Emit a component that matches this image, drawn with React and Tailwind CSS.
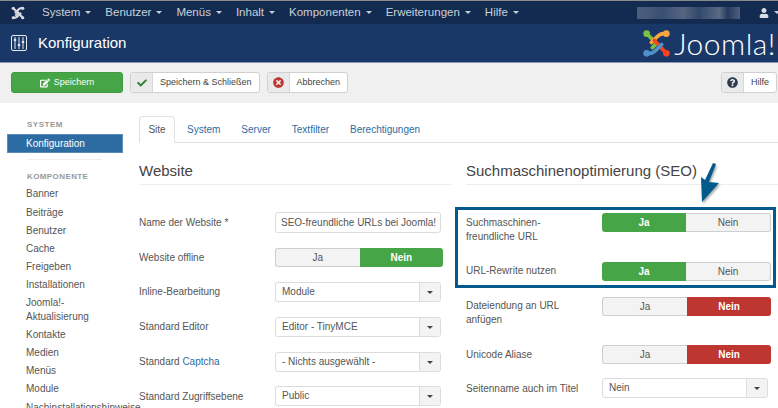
import React from "react";
import { FaCheck, FaQuestionCircle, FaTimesCircle, FaEdit, FaUser } from "react-icons/fa";

const Caret = ({ c = "border-t-[#c5cdd9]" }) => (
  <span className={`inline-block w-0 h-0 border-x-[3px] border-x-transparent border-t-[3px] ${c} ml-[5px] align-middle`} />
);

const JLogo = ({ mono, size = 20 }) => {
  const cols = mono ? ["#d5d9e0", "#d5d9e0", "#d5d9e0", "#d5d9e0"] : ["#7ac143", "#f9a541", "#f44321", "#5091cd"];
  return (
    <svg className="shrink-0" width={size} height={size} viewBox="0 0 28 28" fill="none" strokeLinecap="round" strokeWidth={mono ? 4.4 : 3.6}>
      <path d="M5 5 L14 14 L10 18" stroke={cols[0]} />
      <circle cx="4.5" cy="4.5" r="3.2" fill={cols[0]} />
      <path d="M23 5 C19 3 16 6 14 8 L9 13" stroke={cols[1]} />
      <circle cx="23.5" cy="4.5" r="3.2" fill={cols[1]} />
      <path d="M23 23 L12 11" stroke={cols[2]} />
      <circle cx="23.5" cy="23.5" r="3.2" fill={cols[2]} />
      <path d="M5 23 C9 25 12 22 14 20 L19 15" stroke={cols[3]} />
      <circle cx="4.5" cy="23.5" r="3.2" fill={cols[3]} />
    </svg>
  );
};

const Toggle = ({ on, w = "w-[169px]", cls = "" }) => {
  const base = "flex-1 flex items-center justify-center text-[10px]";
  const idle = "bg-[#f3f3f3] text-[#555] border border-[#cfcfcf]";
  const active = on === "rot" ? "bg-[#bd362f] text-white font-bold" : "bg-[#46a546] text-white font-bold";
  const jaOn = on === "ja";
  return (
    <div className={`flex h-[19px] ${w} ${cls}`}>
      <div className={`${base} rounded-l-[3px] ${jaOn ? active : idle + " border-r-0"}`}>Ja</div>
      <div className={`${base} rounded-r-[3px] ${jaOn ? idle + " border-l-0" : active}`}>Nein</div>
    </div>
  );
};

const Select = ({ v, cls = "" }) => (
  <div className={`flex h-[20px] w-[166px] border border-[#dcdcdc] rounded-[3px] bg-white text-[10px] text-[#555] ${cls}`}>
    <div className="flex-1 pl-[6px] leading-[18px] whitespace-nowrap overflow-hidden">{v}</div>
    <div className="w-[21px] bg-[#f3f3f3] border-l border-[#dcdcdc] rounded-r-[3px] flex items-center justify-center">
      <span className="w-0 h-0 border-x-[3px] border-x-transparent border-t-[3px] border-t-[#444]" />
    </div>
  </div>
);

const Row = ({ label, h, children }) => (
  <div className={`flex items-start ${h}`}>
    <div className="w-[136px] shrink-0 pt-[1px] text-[10px] leading-[14px] text-[#555]">{label}</div>
    {children}
  </div>
);

const ToolBtn = ({ icon, label, cls = "" }) => (
  <div className={`flex h-[21px] border border-[#d0d0d0] rounded-[3px] bg-white text-[9px] text-[#444] ${cls}`}>
    <div className="w-[22px] bg-[#eaeaea] border-r border-[#d8d8d8] rounded-l-[3px] flex items-center justify-center">{icon}</div>
    <div className="px-[7px] leading-[19px] whitespace-nowrap">{label}</div>
  </div>
);

const side = ["Banner", "Beiträge", "Benutzer", "Cache", "Freigeben", "Installationen", "Joomla!-\nAktualisierung", "Kontakte", "Medien", "Menüs", "Module", "Nachinstallationshinweise"];
const nav = ["System", "Benutzer", "Menüs", "Inhalt", "Komponenten", "Erweiterungen", "Hilfe"];
const tabs = ["System", "Server", "Textfilter", "Berechtigungen"];

export default function App() {
  return (
    <div className="relative w-[778px] h-[408px] overflow-hidden bg-white font-['Liberation_Sans',Arial,sans-serif]">
      <div className="h-px bg-[#8a8a8a]" />
      {/* nav */}
      <div className="h-[23px] bg-[#132b51] flex items-center pl-[11px] text-[#c9d0da] text-[11.5px]">
        <JLogo mono size={14} />
        <div className="flex ml-[17px] gap-[14px] whitespace-nowrap">
          {nav.map((n) => (
            <span key={n}>{n}<Caret /></span>
          ))}
        </div>
        <div className="ml-[118px] w-[103px] h-[12px] shrink-0 bg-[linear-gradient(90deg,#5c6c87,#43597c_25%,#66748c_45%,#3a5073_60%,#6b7990_80%,#2a4063_88%,#5c6c87)] opacity-80" />
        <FaUser className="ml-[19px] shrink-0 text-[#d8dde5] text-[10px]" />
        <Caret />
      </div>
      {/* header */}
      <div className="h-[39px] bg-[#1a3867] border-b border-[#8a99b0] flex items-center pl-[11px] text-white">
        <svg width="16" height="16" viewBox="0 0 16 16" fill="none" stroke="#e6eaf0" strokeWidth="1">
          <rect x="0.5" y="0.5" width="15" height="15" rx="1.5" />
          <path d="M4 2v12M8 2v12M12 2v12" />
          <path d="M2.8 5h2.4M6.8 10h2.4M10.8 7h2.4" strokeWidth="2" />
        </svg>
        <span className="ml-[11px] text-[15px] text-white">Konfiguration</span>
        <div className="ml-auto mr-[2px] flex items-center">
          <JLogo size={29} />
          <span className="ml-[3px] text-[30px] leading-[30px] font-['Lato',sans-serif] font-light text-white tracking-[0.5px]">Joomla!</span>
        </div>
      </div>
      {/* toolbar */}
      <div className="h-[40px] bg-[#f0f0f0] flex items-center pl-[11px] pr-[1px] pb-[1px]">
        <div className="w-[112px] h-[21px] bg-[#46a546] rounded-[3px] flex items-center justify-center text-white text-[9px] border border-[#429a42]">
          <FaEdit className="text-[10px] mr-[4px]" />Speichern
        </div>
        <ToolBtn cls="ml-[7px]" icon={<FaCheck className="text-[#378137] text-[10px]" />} label="Speichern & Schließen" />
        <ToolBtn cls="ml-[7px]" icon={<FaTimesCircle className="text-[#bd362f] text-[11px]" />} label="Abbrechen" />
        <ToolBtn cls="ml-auto" icon={<FaQuestionCircle className="text-[#2d3a4d] text-[11px]" />} label="Hilfe" />
      </div>
      <div className="flex">
        {/* sidebar */}
        <div className="w-[139px] shrink-0 pl-[7px] pt-[17px] text-[10px]">
          <div className="pl-[20px] text-[8px] font-bold tracking-[0.5px] text-[#999] leading-[10px]">SYSTEM</div>
          <div className="w-[116px] h-[19px] mt-[4px] bg-[#2d6ca2] text-white pl-[18px] leading-[17px] border border-[#5a8cb8]">Konfiguration</div>
          <div className="ml-[20px] mt-[6px] w-[75px] h-[1px] bg-[#eeeeee]" />
          <div className="pl-[20px] mt-[12px] text-[8px] font-bold tracking-[0.4px] text-[#999] leading-[10px]">KOMPONENTE</div>
          <div className="pl-[19px] mt-[3px] text-[#555] whitespace-pre leading-[13.3px]">
            {side.map((s) => (
              <div key={s} className="py-[2.45px]">{s}</div>
            ))}
          </div>
        </div>
        {/* main */}
        <div className="flex-1 pt-[13px]">
          <div className="flex items-end h-[27px] border-b border-[#e0e0e0] text-[10px] text-[#2d6ca2]">
            <div className="h-[27px] w-[36px] border border-[#e0e0e0] border-b-white rounded-t-[4px] bg-white text-[#555] flex items-center justify-center -mb-px">Site</div>
            <div className="flex gap-[21px] ml-[12px] h-[26px] items-center">
              {tabs.map((t) => <span key={t}>{t}</span>)}
            </div>
          </div>
          <div className="flex">
            {/* left */}
            <div className="w-[313px] shrink-0">
              <div className="h-[42px] border-b border-[#eeeeee] text-[15px] text-[#444] leading-[18px] pt-[19px]">Website</div>
              <div className="pt-[30px]">
                <Row label="Name der Website *" h="h-[35px]">
                  <div className="w-[166px] h-[21px] -mt-[3px] border border-[#dcdcdc] rounded-[3px] text-[10px] text-[#555] pl-[5px] leading-[19px] whitespace-nowrap overflow-hidden">SEO-freundliche URLs bei Joomla!</div>
                </Row>
                <Row label="Website offline" h="h-[34px]"><Toggle on="nein" w="w-[168px]" cls="-mt-[2px]" /></Row>
                <Row label="Inline-Bearbeitung" h="h-[35px]"><Select v="Module" cls="-mt-[2px]" /></Row>
                <Row label="Standard Editor" h="h-[35px]"><Select v="Editor - TinyMCE" cls="-mt-[2px]" /></Row>
                <Row label={<>Standard <span className="text-[#2d6ca2]">Captcha</span></>} h="h-[35px]"><Select v="- Nichts ausgewählt -" cls="-mt-[2px]" /></Row>
                <Row label="Standard Zugriffsebene" h="h-[18px]"><Select v="Public" cls="-mt-[3px]" /></Row>
              </div>
            </div>
            {/* right */}
            <div className="pl-[14px] flex-1">
              <div className="h-[42px] border-b border-[#eeeeee] text-[15px] text-[#444] leading-[18px] pt-[19px] whitespace-nowrap">Suchmaschinenoptimierung (SEO)</div>
              <div className="pt-[30px]">
                <Row label={<>Suchmaschinen-<br />freundliche URL</>} h="h-[48px]"><Toggle on="ja" cls="-mt-[2px]" /></Row>
                <Row label="URL-Rewrite nutzen" h="h-[35px]"><Toggle on="ja" cls="-mt-[1px]" /></Row>
                <Row label={<>Dateiendung an URL<br />anfügen</>} h="h-[49px]"><Toggle on="rot" cls="-mt-[1px]" /></Row>
                <Row label="Unicode Aliase" h="h-[34px]"><Toggle on="rot" cls="-mt-[2px]" /></Row>
                <Row label="Seitenname auch im Titel" h="h-[20px]"><Select v="Nein" cls="-mt-[3px]" /></Row>
              </div>
            </div>
          </div>
        </div>
      </div>
      {/* highlight overlay */}
      <div className="absolute left-[455px] top-[207px] w-[321px] h-[81px] border-[3px] border-[#045a8d]" />
      <svg className="absolute left-[694px] top-[160px] drop-shadow-[1px_2px_1px_rgba(0,0,0,0.35)]" width="28" height="44" viewBox="0 0 28 44">
        <path d="M19 3 L22 4 L15 22 L25 23 L8 42 L7 17 L11 20 Z" fill="#045a8d" />
      </svg>
    </div>
  );
}
